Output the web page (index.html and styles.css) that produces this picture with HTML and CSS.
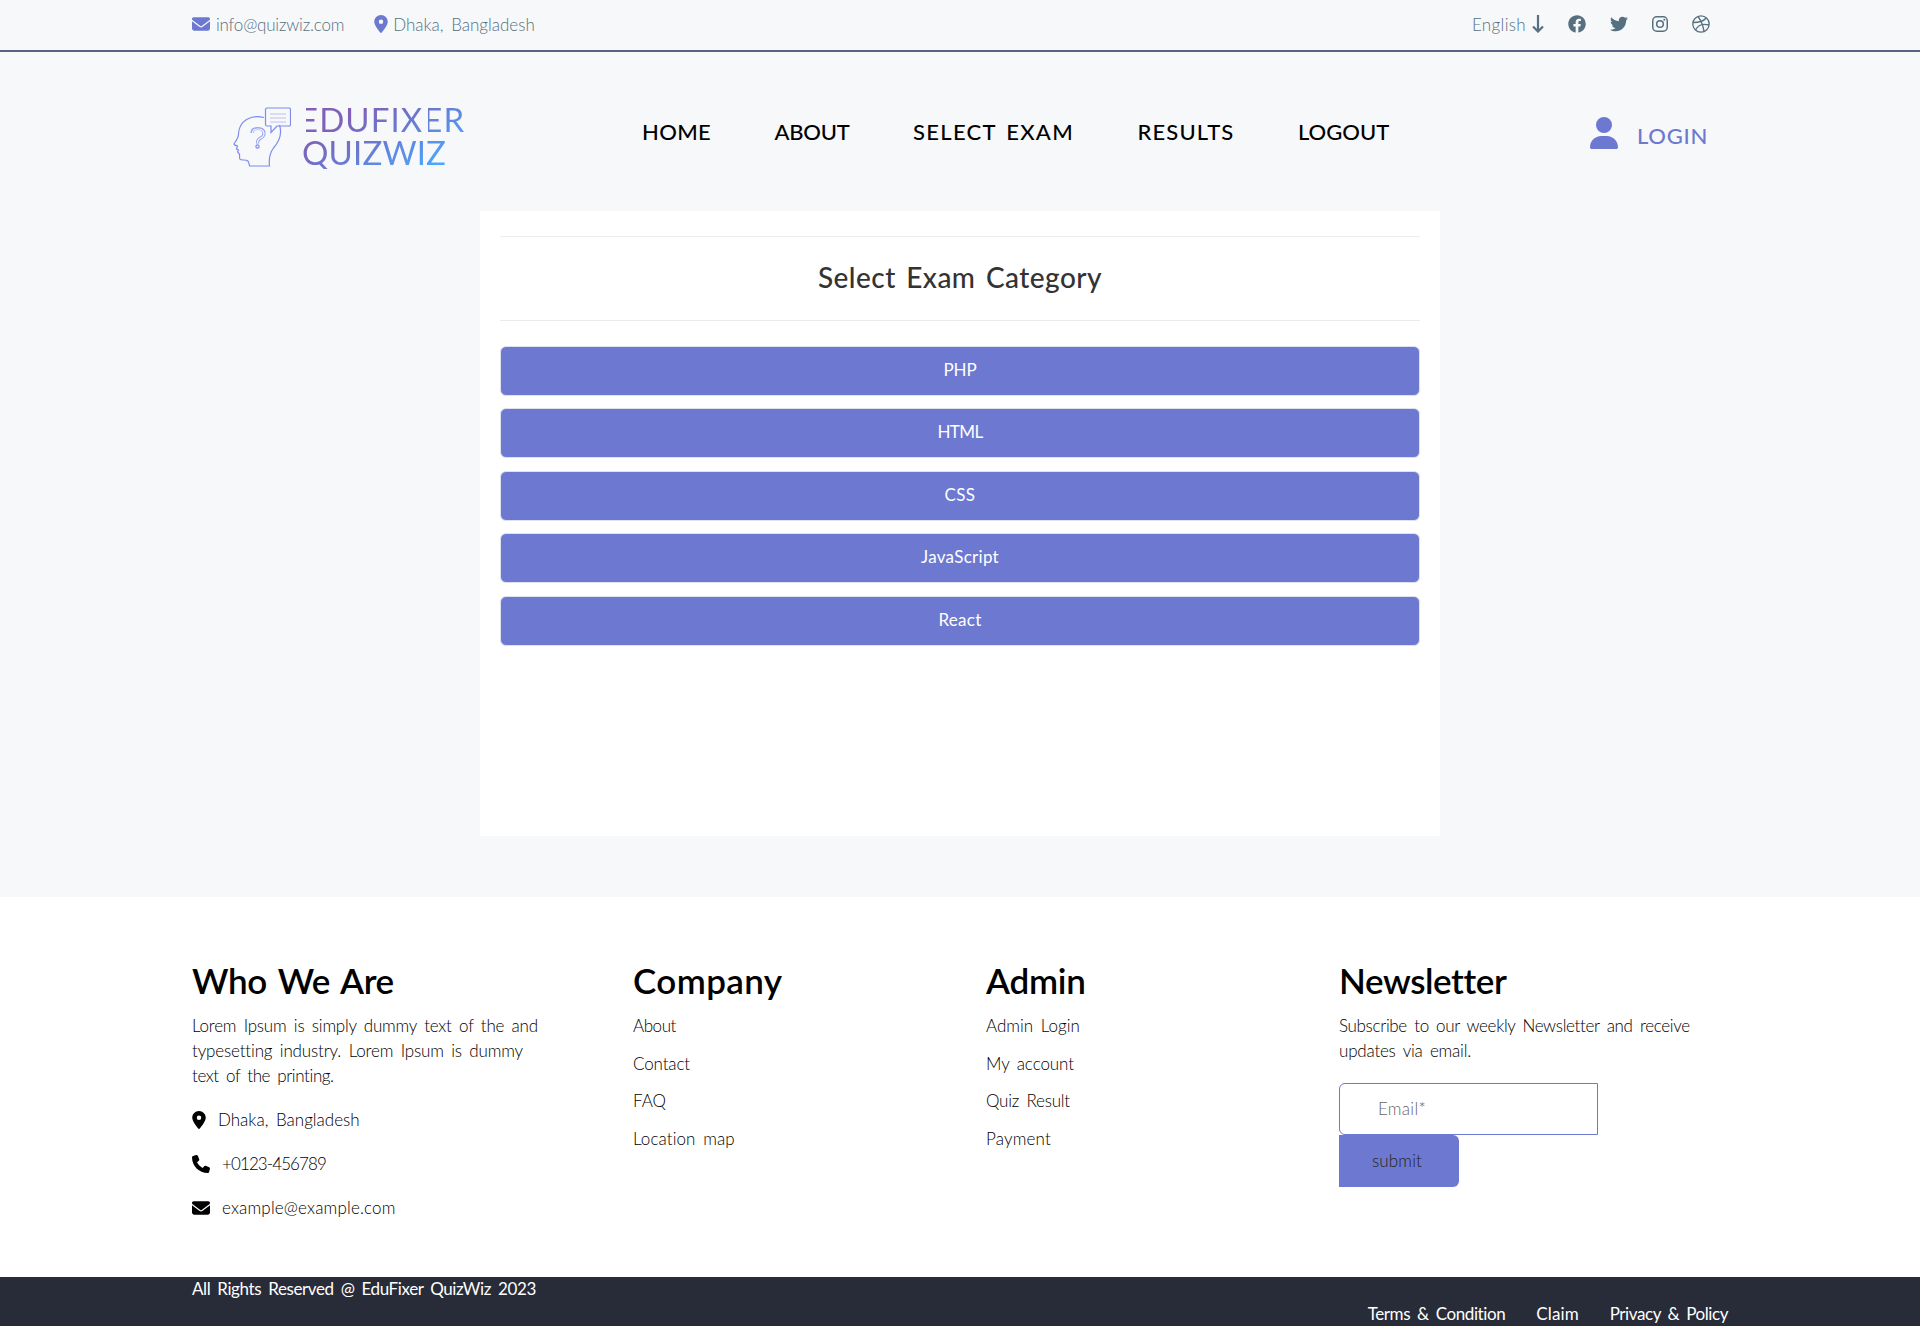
FILE: index.html
```html
<!DOCTYPE html>
<html lang="en">
<head>
<meta charset="utf-8">
<title>EduFixer QuizWiz</title>
<link rel="stylesheet" href="styles.css">
</head>
<body>
<svg class="defs" width="0" height="0">
  <symbol id="mail" viewBox="0 0 512 512"><path d="M48 64C21.500 64 0 85.500 0 112c0 15.100 7.100 29.300 19.200 38.400L236.800 313.600c11.400 8.500 27 8.500 38.400 0L492.800 150.400c12.100-9.100 19.200-23.300 19.200-38.400c0-26.500-21.500-48-48-48H48zM0 176V384c0 35.300 28.700 64 64 64H448c35.300 0 64-28.700 64-64V176L294.400 339.200c-22.800 17.100-54 17.100-76.800 0L0 176z"/></symbol>
  <symbol id="pin" viewBox="0 0 384 512"><path d="M215.700 499.200C267 435 384 279.400 384 192C384 86 298 0 192 0S0 86 0 192c0 87.400 117 243 168.300 307.200c12.300 15.300 35.100 15.300 47.400 0zM192 128a64 64 0 1 1 0 128 64 64 0 1 1 0-128z"/></symbol>
  <symbol id="phone" viewBox="0 0 512 512"><path d="M164.900 24.600c-7.700-18.600-28-28.500-47.400-23.200l-88 24C12.100 30.200 0 46 0 64C0 311.400 200.600 512 448 512c18 0 33.800-12.100 38.600-29.500l24-88c5.300-19.400-4.600-39.700-23.200-47.400l-96-40c-16.300-6.800-35.200-2.100-46.300 11.600L304.700 368C234.300 334.700 177.300 277.700 144 207.300L193.300 167c13.700-11.200 18.400-30 11.600-46.300l-40-96z"/></symbol>
  <symbol id="user" viewBox="0 0 448 512"><path d="M224 256A128 128 0 1 0 224 0a128 128 0 1 0 0 256zm-45.700 48C79.800 304 0 383.800 0 482.300C0 498.700 13.300 512 29.700 512H418.300c16.400 0 29.700-13.300 29.700-29.700C448 383.800 368.200 304 269.700 304H178.300z"/></symbol>
</svg>

<div class="topbar">
  <div class="wrap topbar-in">
    <div class="contact">
      <svg class="i18"><use href="#mail"/></svg><span class="t t-info">info@quizwiz.com</span>
      <svg class="pin pin-top"><use href="#pin"/></svg><span class="t t-dhaka">Dhaka, Bangladesh</span>
    </div>
    <div class="social">
      <span class="t t-eng">English</span>
      <svg class="arrow" viewBox="0 0 12 18"><path d="M6 0v16M1 11.500l5 5 5-5" fill="none" stroke="currentColor" stroke-width="2.200"/></svg>
      <svg class="i18 fb" viewBox="0 0 512 512"><path d="M504 256C504 119 393 8 256 8S8 119 8 256c0 123.800 90.700 226.400 209.300 245V327.700h-63V256h63v-54.600c0-62.200 37-96.500 93.700-96.500 27.100 0 55.500 4.800 55.500 4.800v61h-31.300c-30.800 0-40.400 19.100-40.400 38.700V256h68.800l-11 71.700h-57.800V501C413.300 482.400 504 379.800 504 256z"/></svg>
      <svg class="i18 tw" viewBox="0 0 512 512"><path d="M459.400 151.700c.300 4.500.300 9.100.300 13.600 0 138.700-105.600 298.600-298.600 298.600-59.500 0-114.700-17.200-161.100-47.100 8.400 1 16.600 1.300 25.300 1.300 49.100 0 94.200-16.600 130.300-44.800-46.100-1-84.800-31.200-98.100-72.800 6.500 1 13 1.600 19.800 1.600 9.400 0 18.800-1.300 27.600-3.600-48.100-9.700-84.100-52-84.100-103v-1.300c14 7.800 30.200 12.700 47.400 13.300-28.300-18.800-46.800-51-46.800-87.400 0-19.500 5.200-37.400 14.300-53 51.700 63.700 129.300 105.300 216.400 109.800-1.600-7.800-2.600-15.900-2.600-24 0-57.800 46.800-104.900 104.900-104.900 30.200 0 57.500 12.700 76.700 33.100 23.700-4.500 46.500-13.300 66.600-25.300-7.800 24.400-24.400 44.800-46.100 57.800 21.100-2.300 41.600-8.100 60.400-16.200-14.300 20.800-32.200 39.300-52.600 54.300z"/></svg>
      <svg class="insta" viewBox="0 0 16 16"><g fill="none" stroke="currentColor" stroke-width="1.500"><rect x=".75" y=".75" width="14.500" height="14.500" rx="4"/><circle cx="8" cy="8" r="3.300"/></g><circle cx="12.300" cy="3.700" r="1"/></svg>
      <svg class="i18 drib" viewBox="0 0 18 18"><g fill="none" stroke="currentColor" stroke-width="1.300"><circle cx="9" cy="9" r="8.200"/><path d="M6 1.500c3 4 5 8.500 6 14.800M1 7.500c5 0 10-.500 13.300-4.500M3.500 15c2.500-5 7.500-6.700 13.500-5"/></g></svg>
    </div>
  </div>
</div>

<header class="wrap header">
  <div class="logo">
    <svg class="head" viewBox="0 0 58 60"><g fill="none" stroke="#7c8cf0" stroke-width="1.200"><path d="M31 10.500C18 7 6 14 5.500 27c0 3-1 5-4 9-1 2 0 2 3 3l-1 3 2 1-1 2 2 2c0 6 0 6 4 6 5 0 5 1 6 6h20c-1-9 1-14 4-18 6-7 9-14 6-23"/><path d="M34 1h22q1.500 0 1.500 1.500v15q0 1.500-1.500 1.500H44l-6 6.500V19h-4q-1.500 0-1.500-1.500v-15Q32.500 1 34 1z"/><path d="M37 7h16M37 11h16M37 15h16" stroke="#b9c0f0"/><path d="M19 26q0-4.500 6-4.500t6 5q0 3-4 5-2.500 1-2.500 5" stroke="#9aa4ee" stroke-width="3.200"/><path d="M19.500 26q0-4 5.500-4t6 4.500q0 3-4 5-2.500 1-2.500 4.500" stroke="#f7f8fa"/><circle cx="24.500" cy="39.500" r="1.600"/></g></svg>
    <div class="brand"><span class="b1">EDUFIXER</span><span class="b2">QUIZWIZ</span></div>
  </div>
  <nav class="nav">
    <a><span class="t t-home">HOME</span></a><a><span class="t t-about">ABOUT</span></a><a><span class="t t-sel">SELECT EXAM</span></a><a><span class="t t-res">RESULTS</span></a><a><span class="t t-out">LOGOUT</span></a>
  </nav>
  <a class="login"><svg class="user"><use href="#user"/></svg><span class="t t-login">LOGIN</span></a>
</header>

<main class="card">
  <h1 class="card-title"><span class="t t-title">Select Exam Category</span></h1>
  <div class="list">
    <a class="btn"><span class="t t-php">PHP</span></a>
    <a class="btn"><span class="t t-html">HTML</span></a>
    <a class="btn"><span class="t t-css">CSS</span></a>
    <a class="btn"><span class="t t-js">JavaScript</span></a>
    <a class="btn"><span class="t t-react">React</span></a>
  </div>
</main>

<footer class="footer">
  <div class="wrap cols">
    <section class="who">
      <h2><span class="t t-who">Who We Are</span></h2>
      <p><span class="t t-l1">Lorem Ipsum is simply dummy text of the and</span><br><span class="t t-l2">typesetting industry. Lorem Ipsum is dummy</span><br><span class="t t-l3">text of the printing.</span></p>
      <div class="info"><svg class="pin"><use href="#pin"/></svg><span class="t t-dhaka">Dhaka, Bangladesh</span></div>
      <div class="info"><svg class="i18"><use href="#phone"/></svg><span class="t t-tel">+0123-456789</span></div>
      <div class="info"><svg class="i18"><use href="#mail"/></svg><span class="t t-mail">example@example.com</span></div>
    </section>
    <section class="links">
      <h2><span class="t t-comp">Company</span></h2>
      <a><span class="t t-ab">About</span></a><a><span class="t t-con">Contact</span></a><a><span class="t">FAQ</span></a><a><span class="t t-loc">Location map</span></a>
    </section>
    <section class="links">
      <h2><span class="t t-adm">Admin</span></h2>
      <a><span class="t">Admin Login</span></a><a><span class="t t-my">My account</span></a><a><span class="t t-qr">Quiz Result</span></a><a><span class="t t-pay">Payment</span></a>
    </section>
    <section class="news">
      <h2><span class="t t-news">Newsletter</span></h2>
      <p><span class="t t-n1">Subscribe to our weekly Newsletter and receive</span><br><span class="t t-n2">updates via email.</span></p>
      <div class="email"><span class="t t-email">Email*</span></div>
      <div class="submit"><span class="t t-submit">submit</span></div>
    </section>
  </div>
</footer>
<div class="bottom">
  <div class="wrap bottom-in">
    <span class="copy"><span class="t t-copy">All Rights Reserved @ EduFixer QuizWiz 2023</span></span>
    <div class="legal"><span class="t t-terms">Terms &amp; Condition</span><span class="t t-claim">Claim</span><span class="t t-priv">Privacy &amp; Policy</span></div>
  </div>
</div>
</body>
</html>
```
FILE: styles.css
```css
* { box-sizing: border-box; }
body { margin: 0; height: 1326px; overflow: hidden; background: #f7f8fa; color: #000; font: 300 17px/25px Lato, "Open Sans", sans-serif; }
h1, h2, p { margin: 0; }
.defs { display: block; height: 0; }
svg { fill: currentColor; flex: none; }
.t { white-space: pre; word-spacing: 3px; display: inline-block; }
.wrap { width: 1536px; margin: 0 auto; }
.i18 { width: 18px; height: 18px; }
.pin { width: 14px; height: 18px; }

/* top bar */
.topbar { height: 52px; border-bottom: 2px solid #5c5f85; color: #56707f; }
.topbar-in { display: flex; justify-content: space-between; height: 48px; padding-right: 18px; }
.contact, .social { display: flex; align-items: center; }
.contact svg { color: #6d79d1; margin-right: 6px; }
.contact .pin-top { margin: 0 5px 0 30px; }
.arrow { width: 12px; height: 18px; margin: 0 24px 0 6px; }
.fb, .tw { margin-right: 24px; }
.insta { width: 16px; height: 16px; margin-right: 24px; }

/* header */
.header { display: flex; height: 159px; }
.logo { display: flex; width: 450px; padding: 55px 0 0 41px; }
.head { width: 58px; height: 60px; margin-right: 8px; }
.brand { position: relative; margin-top: -4px; padding-left: 4px; color: transparent; background: linear-gradient(150deg, #8060b8 25%, #6a78cf 50%, #4aa6ff 85%); -webkit-background-clip: text; background-clip: text; width: 171px; height: 66px; font-size: 33px; line-height: 33px; font-weight: 400; }
.b1, .b2 { display: block; height: 33px; white-space: pre; }
.b1 { margin-left: -4px; letter-spacing: 1.100px; }
.b2 { letter-spacing: .15px; margin-left: -1px; }
/* the two E's of the wordmark have no stem */
.brand::before, .brand::after { content: ""; position: absolute; top: 3px; height: 28px; width: 5px; background: #f7f8fa; }
.brand::before { left: 1.500px; }
.brand::after { left: 124px; }
.nav { display: flex; gap: 63.500px; padding-top: 67px; font-size: 22px; line-height: 26px; font-weight: 500; width: 948px; }
.login { display: flex; align-items: flex-start; padding-top: 65px; color: #6d79d1; font-size: 22px; line-height: 38px; font-weight: 500; gap: 19px; }
.user { width: 28px; height: 32px; }

/* exam card */
.card { width: 960px; height: 625px; margin: 0 auto; background: #fff; padding: 25px 20px; }
.card-title { height: 85px; border-top: 1px solid #ebebeb; border-bottom: 1px solid #ebebeb; font-size: 28px; line-height: 81px; font-weight: 500; text-align: center; color: #333; }
.list { display: flex; flex-direction: column; gap: 12.400px; padding-top: 25px; }
.btn { height: 50px; border: 1px solid #dfe1ee; border-radius: 6px; background: #6d79d1; color: #fff; text-align: center; line-height: 46px; font-weight: 400; }

/* footer */
.footer { margin-top: 61px; height: 380px; background: #fff; }
.cols { display: grid; grid-template-columns: 441px 353px 353px 389px; padding-top: 58px; }
h2 { font-size: 35px; line-height: 50px; font-weight: 600; height: 58px; }
.info { display: flex; align-items: center; gap: 12px; height: 25px; margin-top: 19px; }
.links a { display: block; height: 37.600px; }
.email { width: 259px; height: 52px; border: 1px solid #6d79d1; border-radius: 6px 0 0 6px; margin-top: 20px; padding-left: 38px; line-height: 49px; color: #666; }
.submit { width: 120px; height: 52px; border-radius: 0 6px 6px 0; background: #6d79d1; color: #222; padding-left: 33px; line-height: 51px; }
.bottom { height: 49px; background: #282c38; color: #fff; font-weight: 400; }
.bottom-in { display: flex; justify-content: space-between; }
.copy { line-height: 24px; }
.legal { display: flex; gap: 31px; padding-top: 24px; }

/* tracking */
.t-info { letter-spacing: -.2px; }
.t-eng { letter-spacing: .33px; }
.t-home { letter-spacing: .32px; }
.t-about { letter-spacing: -.24px; }
.t-sel { letter-spacing: 1.310px; }
.t-res { letter-spacing: 1.140px; }
.t-login { letter-spacing: .71px; }
.t-title { letter-spacing: .45px; }
.t-php { letter-spacing: -.14px; }
.t-html { letter-spacing: -.64px; }
.t-css { letter-spacing: .4px; }
.t-js { letter-spacing: .29px; }
.t-react { letter-spacing: .25px; }
.t-who { letter-spacing: -.4px; }
.t-l1 { letter-spacing: -.22px; }
.t-l2 { letter-spacing: -.16px; }
.t-l3 { letter-spacing: -.4px; }
.t-tel { letter-spacing: -.9px; }
.t-mail { letter-spacing: .17px; }
.t-comp { letter-spacing: .4px; }
.t-ab { letter-spacing: -.42px; }
.t-con { letter-spacing: -.14px; }
.t-loc { letter-spacing: .08px; }
.t-adm { letter-spacing: -.2px; }
.t-my { letter-spacing: -.08px; }
.t-qr { letter-spacing: -.22px; }
.t-pay { letter-spacing: .18px; }
.t-news { letter-spacing: -.4px; }
.t-n1 { letter-spacing: -.33px; }
.t-n2 { letter-spacing: -.21px; }
.t-email { letter-spacing: .29px; }
.t-submit { letter-spacing: .13px; }
.t-copy { letter-spacing: -.39px; }
.t-terms { letter-spacing: -.4px; }
.t-claim { letter-spacing: .1px; }
.t-priv { letter-spacing: -.42px; }
```
